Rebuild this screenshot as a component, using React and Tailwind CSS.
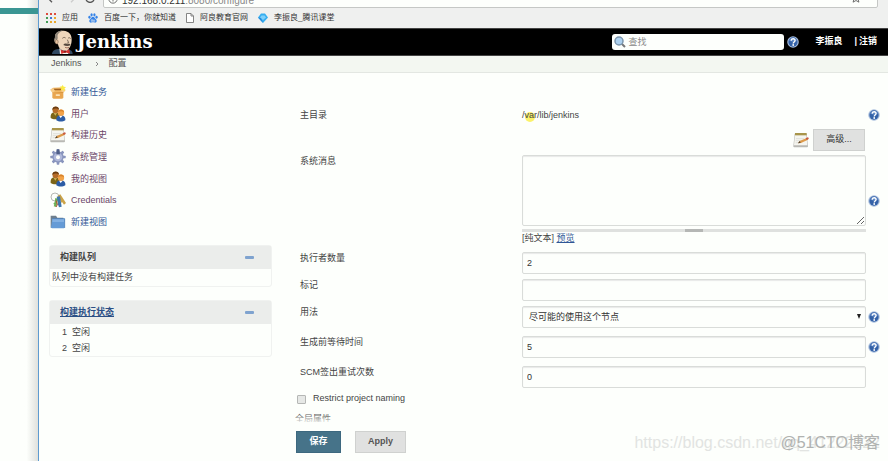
import React from "react";

function HelpIcon() {
  return (
    <svg viewBox="0 0 24 24" className="block size-3">
      <circle cx="12" cy="12" r="11.5" fill="#a9bedd" />
      <circle cx="12" cy="12" r="9.3" fill="#3462a8" />
      <path d="M4 9a8.5 8.5 0 0 1 16 0c-5 3-11 3-16 0z" fill="#5f88c4" />
      <path d="M8.3 9.3c.2-5 7.8-5 7.8-.3 0 3-3.6 3-3.6 5.8" fill="none" stroke="#fff" strokeWidth="2.8" />
      <circle cx="12.4" cy="18" r="1.8" fill="#fff" />
    </svg>
  );
}

function HelpButton() {
  return (
    <button type="button" aria-label="帮助" className="block shrink-0">
      <HelpIcon />
    </button>
  );
}

function BoxIcon() {
  return (
    <svg viewBox="0 0 48 48" className="size-4">
      <path d="M7 21h33v19q0 4-4 4H11q-4 0-4-4z" fill="#e9a64f" />
      <path d="M7 21h33v5H7z" fill="#c47a25" />
      <path d="M1 17l8-6 30-1 7 8-8 7-30 1z" fill="#f0b765" />
      <path d="M10 14h27l3 5H8z" fill="#a56420" />
      <path d="M1 17l9-5 5 9-8 5zM47 18l-8-6-6 9 8 5z" fill="#f7cd8a" />
      <rect x="17" y="31" width="13" height="5" rx="2" fill="#fbe3b8" />
      <path d="M38 2l3 6 7 1-5 5 2 7-7-4-6 3 2-7-5-5 7-1z" fill="#fbec45" />
    </svg>
  );
}

function PeopleIcon() {
  return (
    <svg viewBox="0 0 48 48" className="size-4">
      <path d="M2 36c-1-12 4-17 13-17s15 5 14 17c-7 5-20 5-27 0z" fill="#7b6417" />
      <path d="M11 21l5 8 5-8z" fill="#c9b45a" />
      <circle cx="17" cy="12" r="9.5" fill="#b56c28" />
      <path d="M7 12C6-1 27-2 27 11c-4-4-13-5-20 1z" fill="#6b3d10" />
      <path d="M19 43c-1-10 4-15 13-15s15 5 14 15c-7 5-20 5-27 0z" fill="#2b5ca5" />
      <path d="M27 29l5 7 6-7z" fill="#fff" />
      <circle cx="33" cy="20" r="9.5" fill="#f2a348" />
      <path d="M24 19c0-11 18-11 18 0-5-4-12-5-18 0z" fill="#d8832b" />
    </svg>
  );
}

function NotepadIcon() {
  return (
    <svg viewBox="0 0 48 48" className="size-4">
      <path d="M5 5h36l4 38q0 3-3 3H4q-3 0-3-3z" fill="#b9b9b4" />
      <path d="M6 9h34l3 31H3z" fill="#f5f5ef" />
      <path d="M6 3h35v7H6z" fill="#a8954a" />
      <path d="M9 20h24M8 26h18M8 32h14" stroke="#d3d7d0" strokeWidth="2" />
      <path d="M15 34l5-7 21-9 4 5-21 10z" fill="#dd9a4a" />
      <path d="M38 19l6-3q4 1 3 5l-6 3z" fill="#c95b43" />
      <path d="M15 34l5-7 3 5z" fill="#4d4232" />
    </svg>
  );
}

function GearIcon() {
  return (
    <svg viewBox="0 0 48 48" className="size-4">
      <g fill="#8995bd">
        <rect x="20" y="1" width="8" height="46" rx="2" />
        <rect x="20" y="1" width="8" height="46" rx="2" transform="rotate(45 24 24)" />
        <rect x="20" y="1" width="8" height="46" rx="2" transform="rotate(90 24 24)" />
        <rect x="20" y="1" width="8" height="46" rx="2" transform="rotate(135 24 24)" />
        <circle cx="24" cy="24" r="17" />
      </g>
      <circle cx="24" cy="24" r="13" fill="#b0b9da" />
      <circle cx="24" cy="25" r="6" fill="#fdfffc" />
      <path d="M20 1h8l2 15H19z" fill="#4f5f87" />
    </svg>
  );
}

function KeysIcon() {
  return (
    <svg viewBox="0 0 48 48" className="size-4">
      <circle cx="15" cy="15" r="12" fill="none" stroke="#b5b8b3" strokeWidth="3" />
      <path d="M22 12l9-5 17 26-6 5-5-7-3 1-2-5z" fill="#cba348" />
      <path d="M16 18l9 2-6 25-8-2 2-5-3-3 4-4z" fill="#6daf54" />
      <path d="M20 14l10-1 5 31-8 2-2-6-3-2 2-6z" fill="#3f76ad" />
      <path d="M19 26l3 12-4 7" fill="none" stroke="#ba4b35" strokeWidth="3" />
    </svg>
  );
}

function FolderIcon() {
  return (
    <svg viewBox="0 0 48 48" className="size-4">
      <path d="M2 5h16l4 6h18v30H2z" fill="#6f7f8c" />
      <path d="M7 14h37v26q0 3-3 3H7q-4 0-4-3z" fill="#659bd6" />
      <path d="M7 14h37v10H7z" fill="#82b0e2" />
      <path d="M7 14h37v28" fill="none" stroke="#4076b1" strokeWidth="2" />
    </svg>
  );
}

function ButlerLogo() {
  return (
    <svg viewBox="0 0 66 72" className="block h-6 w-[22px]">
      <path d="M0 72c0-8 8-14 18-15l30 1c9 2 14 6 14 14z" fill="#2f4860" />
      <path d="M22 54l10 12 17-9v15H24z" fill="#f5f4ee" />
      <path d="M9 22C8 8 20 1 34 2c18 1 26 13 25 29-1 18-8 30-21 31-12 0-18-9-20-19C10 42 4 34 9 22z" fill="#efd6bb" />
      <path d="M9 25C7 10 17 2 31 2 21 7 15 13 17 21c1 6-2 6-3 11-5-2-4-4-5-7z" fill="#8d8478" />
      <path d="M11 30c5-3 9 2 7 8-1 5-6 5-8 0z" fill="#e6c2a0" stroke="#6b5541" strokeWidth="1.5" />
      <path d="M31 25c4-4 7-3 10-1M48 25c3-3 6-2 8 1M46 29l4 9-6 2" fill="none" stroke="#4a3b30" strokeWidth="2" />
      <path d="M34 45c4-6 9-5 12-2 3-3 8-1 10 2-7 4-15 3-22 0z" fill="#55483e" />
      <path d="M39 52c4 2 8 2 12 0" fill="none" stroke="#7d4335" strokeWidth="2" />
      <path d="M26 59l13 5 13-6 2 13-14-4-12 5z" fill="#d6322e" />
      <circle cx="39" cy="65" r="3.5" fill="#8d1c1c" />
    </svg>
  );
}

function AppsIcon() {
  return (
    <svg viewBox="0 0 10 10" className="size-[10px]">
      <path d="M0 0h2v2H0zM4 0h2v2H4zM8 0h2v2H8z" fill="#dd4b3d" />
      <path d="M0 4h2v2H0zM0 8h2v2H0z" fill="#3f9b54" />
      <path d="M4 4h2v2H4z" fill="#4178d5" />
      <path d="M8 4h2v2H8zM4 8h2v2H4zM8 8h2v2H8z" fill="#eaa82d" />
    </svg>
  );
}

function PawIcon() {
  return (
    <svg viewBox="0 0 24 24" className="size-[10px]" fill="#3583e8">
      <ellipse cx="3.5" cy="10" rx="2.7" ry="3.5" />
      <ellipse cx="8.6" cy="4.4" rx="2.7" ry="3.9" />
      <ellipse cx="15.4" cy="4.4" rx="2.7" ry="3.9" />
      <ellipse cx="20.5" cy="10" rx="2.7" ry="3.5" />
      <path d="M12 9c4 0 4 4 7 6 4 4 1 9-3 8-3-1-5-1-8 0-4 1-7-4-3-8 3-2 3-6 7-6z" />
      <path d="M8 16h3v4H8zM13 16v4h3v-4" fill="none" stroke="#eef1ee" strokeWidth="1.3" />
    </svg>
  );
}

function PageIcon() {
  return (
    <svg viewBox="0 0 16 20" className="h-[10px] w-2">
      <path d="M1 1h9l5 5v13H1z" fill="#fff" stroke="#777" strokeWidth="1.8" />
      <path d="M10 1v5h5" fill="none" stroke="#777" strokeWidth="1.8" />
    </svg>
  );
}

function DiamondIcon() {
  return (
    <svg viewBox="0 0 20 20" className="size-[10px]">
      <path d="M6 1h8l6 8-10 11L0 9z" fill="#36aef0" />
      <path d="M7 5h6l3 4-6 5-6-5z" fill="#7fd0fa" />
      <path d="M10 20L0 9l6 1z" fill="#2688dc" />
    </svg>
  );
}

const bookmarks = [
  { icon: <AppsIcon />, label: "应用" },
  { icon: <PawIcon />, label: "百度一下，你就知道" },
  { icon: <PageIcon />, label: "阿良教育官网" },
  { icon: <DiamondIcon />, label: "李振良_腾讯课堂" },
];

function Browser() {
  return (
    <div className="bg-[#eff0ef] text-[#333]">
      <div className="flex h-2 items-end overflow-hidden pr-[10px] pl-2">
        <div className="flex h-4 w-14 shrink-0 items-end gap-[9px] pb-[5px]">
          <svg viewBox="0 0 12 12" className="size-[10px]" fill="none" stroke="#555" strokeWidth="1.6">
            <path d="M11 6H2M6 1L1 6l5 5" />
          </svg>
          <svg viewBox="0 0 12 12" className="size-[10px]" fill="none" stroke="#ccc" strokeWidth="1.6">
            <path d="M1 6h9M6 1l5 5-5 5" />
          </svg>
          <svg viewBox="0 0 12 12" className="size-[10px]" fill="none" stroke="#555" strokeWidth="1.6">
            <path d="M10.5 4A5 5 0 1 0 11 7M11 1v4H7" />
          </svg>
        </div>
        <div className="flex h-5 flex-1 items-end gap-1 rounded-[2px] border border-[#c5c7c5] bg-[#fdfffc] pr-4 pl-1">
          <svg viewBox="0 0 12 12" className="mb-[3px] size-[10px] shrink-0" fill="none" stroke="#555">
            <circle cx="6" cy="6" r="5" />
            <path d="M6 5v4M6 2.5v1.3" />
          </svg>
          <span className="flex-1 text-[10px] leading-3 text-[#888]">
            <span className="text-[#333]">192.168.0.211</span>:8080/configure
          </span>
          <svg viewBox="0 0 12 12" className="mb-1 size-[10px]" fill="none" stroke="#555">
            <path d="M6 1l1.500 3.500 4 .3-3 2.600 1 3.600L6 9l-3.500 2 1-3.600-3-2.600 4-.3z" />
          </svg>
        </div>
      </div>
      <nav className="flex h-5 items-center gap-[10px] pl-[7px] text-[8px] leading-3">
        {bookmarks.map((b) => (
          <a key={b.label} href="#" className="flex items-center gap-[6px] whitespace-nowrap">
            {b.icon}
            {b.label}
          </a>
        ))}
      </nav>
    </div>
  );
}

function Header() {
  return (
    <header className="flex h-7 items-center border-y border-[#444] bg-black pr-[11px] pl-[13px] text-[9px] font-bold text-white">
      <a href="#" className="flex flex-1 items-center gap-[3px]">
        <ButlerLogo />
        <span className="font-['DejaVu_Serif','Liberation_Serif',serif] text-[18px] leading-6">Jenkins</span>
      </a>
      <div className="flex h-4 w-[172px] items-center gap-[2px] rounded-[3px] bg-[#fdfffc] pl-[2px]">
        <svg viewBox="0 0 24 24" className="size-3 shrink-0">
          <path d="M15 15l7 7" stroke="#777" strokeWidth="4" />
          <circle cx="10" cy="10" r="8" fill="#acd0ef" stroke="#7b95ad" strokeWidth="3" />
        </svg>
        <input type="search" aria-label="查找" placeholder="查找" className="h-4 w-full bg-transparent text-[9px] font-normal text-[#333] outline-none placeholder:text-[#888]" />
      </div>
      <div className="ml-[3px]"><HelpButton /></div>
      <a href="#" className="ml-4">李振良</a>
      <span className="mr-[2px] ml-3">|</span>
      <a href="#">注销</a>
    </header>
  );
}

const tasks = [
  { icon: <BoxIcon />, label: "新建任务", color: "text-[#2f5796]" },
  { icon: <PeopleIcon />, label: "用户", color: "text-[#6b4668]" },
  { icon: <NotepadIcon />, label: "构建历史", color: "text-[#6b4668]" },
  { icon: <GearIcon />, label: "系统管理", color: "text-[#6b4668]" },
  { icon: <PeopleIcon />, label: "我的视图", color: "text-[#6b4668]" },
  { icon: <KeysIcon />, label: "Credentials", color: "text-[#6b4668]" },
  { icon: <FolderIcon />, label: "新建视图", color: "text-[#2f5796]" },
];

function Pane({ title, children }) {
  return (
    <section className="rounded-[3px] border border-[#f0f2f0]">
      <div className="flex h-[23px] items-center justify-between bg-[#ebedeb] pr-[17px] pl-[10px] text-[9px] font-bold">
        {title}
        <button type="button" aria-label="折叠" className="h-[3px] w-[9px] rounded-[1px] bg-[#7fa3cf]" />
      </div>
      {children}
    </section>
  );
}

function Sidebar() {
  return (
    <aside className="flex w-[233px] shrink-0 flex-col pt-2 pl-[10px]">
      <nav className="grid h-[152px] grid-rows-7">
        {tasks.map((t) => (
          <a key={t.label} href="#" className={"flex items-center gap-[5px] pl-px text-[9px] leading-3 " + t.color}>
            {t.icon}
            {t.label}
          </a>
        ))}
      </nav>
      <div className="mt-3 flex flex-col gap-[13px]">
        <Pane title={<span>构建队列</span>}>
          <p className="px-[2px] pt-[2px] pb-[3px] leading-3">队列中没有构建任务</p>
        </Pane>
        <Pane title={<a href="#" className="text-[#2c4f85] underline">构建执行状态</a>}>
          <table className="ml-3 leading-4">
            <tbody>
              <tr><td className="w-[10px]">1</td><td>空闲</td></tr>
              <tr><td className="w-[10px]">2</td><td>空闲</td></tr>
            </tbody>
          </table>
        </Pane>
      </div>
    </aside>
  );
}

const field = "block h-[22px] w-full rounded-[2px] border border-[#d9dcd9] bg-[#fdfffc] px-1 text-[9px] text-[#333] shadow-[inset_0_1px_1px_#e8e9e8]";

function Row({ id, label, help, tall, children }) {
  return (
    <div className={"flex items-start " + (tall ? "pb-2" : "pb-[5px]")}>
      <label htmlFor={id} className="w-[222px] shrink-0 leading-3">{label}</label>
      <div className="min-w-0 flex-1">{children}</div>
      <div className="w-[22px] shrink-0 self-center pl-[2px]">{help && <HelpButton />}</div>
    </div>
  );
}

function ConfigForm() {
  return (
    <form className="min-w-0 flex-1 pt-9 pl-7" onSubmit={(e) => e.preventDefault()}>
      <div className="flex h-5 items-start">
        <span className="w-[222px] shrink-0 leading-3">主目录</span>
        <div className="flex-1 leading-3">
          <span className="relative">
            <span className="absolute top-[2px] left-[3px] size-[10px] rounded-full bg-[#fbf26a]" />
            <span className="relative">/var/lib/jenkins</span>
          </span>
        </div>
        <div className="w-[22px] pl-[2px]"><HelpButton /></div>
      </div>
      <div className="flex items-center justify-end gap-1 pr-[23px] pb-1">
        <NotepadIcon />
        <button type="button" className="h-[22px] w-[52px] border border-[#cfd1cf] bg-[#e0e1e0] text-[#333]">高级...</button>
      </div>
      <div className="flex items-start">
        <label htmlFor="message" className="w-[222px] shrink-0 leading-3">系统消息</label>
        <div className="min-w-0 flex-1">
          <textarea id="message" className="block h-[71px] w-full rounded-[2px] border border-[#d9dcd9] bg-[#fdfffc] p-1 shadow-[inset_0_1px_1px_#e8e9e8]" />
          <div className="mt-[3px] flex h-[3px] justify-center bg-[#dfe1df]">
            <div className="w-[18px] bg-[#b5b7b5]" />
          </div>
          <p className="h-5 leading-3">[纯文本] <a href="#" className="text-[#2f5796] underline">预览</a></p>
        </div>
        <div className="w-[22px] shrink-0 pt-10 pl-[2px]"><HelpButton /></div>
      </div>
      <Row id="executors" label="执行者数量"><input id="executors" defaultValue="2" className={field} /></Row>
      <Row id="labels" label="标记"><input id="labels" className={field} /></Row>
      <Row id="usage" label="用法" help tall>
        <div className="relative">
          <select id="usage" className={field + " appearance-none pt-[2px] pl-[6px]"}>
            <option>尽可能的使用这个节点</option>
          </select>
          <svg viewBox="0 0 4 5" className="pointer-events-none absolute top-2 right-[5px] h-[5px] w-1"><path d="M0 0h4L2 5z" fill="#222" /></svg>
        </div>
      </Row>
      <Row id="quiet" label="生成前等待时间" help tall><input id="quiet" defaultValue="5" className={field} /></Row>
      <Row id="retry" label="SCM签出重试次数"><input id="retry" defaultValue="0" className={field} /></Row>
      <label className="-ml-[3px] flex h-3 items-center gap-[7px]">
        <input type="checkbox" className="m-0 size-[9px] appearance-none rounded-[1px] border border-[#b5b7b5] bg-[#e6e8e6]" />
        Restrict project naming
      </label>
      <div className="relative -ml-[5px] mt-2 h-[9px] overflow-hidden">
        <p className="leading-3">全局属性</p>
        <div className="absolute inset-0 bg-linear-to-b from-[#fdfffc]/0 to-[#fdfffc]/80" />
      </div>
      <div className="-ml-1 mt-[9px] flex gap-[14px] font-bold">
        <button type="submit" className="h-[22px] w-[45px] border border-[#3d687f] bg-[#467389] text-white">保存</button>
        <button type="button" className="h-[22px] w-[51px] border border-[#cfd1cf] bg-[#e0e1e0] text-[#555]">Apply</button>
      </div>
    </form>
  );
}

export default function App() {
  return (
    <div className="relative flex min-h-screen overflow-hidden bg-[#fdfffc] font-['Liberation_Sans','Noto_Sans_CJK_SC',sans-serif] text-[9px] text-[#444]">
      <div className="w-[38px] shrink-0 bg-linear-to-r from-[#fdfffc] from-70% to-[#dfe1dd] pt-2">
        <div className="h-[6px] bg-[#3a9693]" />
      </div>
      <div className="min-w-0 flex-1 border-l border-[#5e9bd0]">
        <Browser />
        <Header />
        <nav className="flex h-[17px] items-center border-b border-[#e3e7e2] bg-[#f3f7f1] pl-3 text-[#555]">
          <a href="#">Jenkins</a>
          <svg viewBox="0 0 4 6" className="mr-[10px] ml-[13px] h-[6px] w-1" fill="none" stroke="#888"><path d="M1 1l2 2-2 2" /></svg>
          <a href="#">配置</a>
        </nav>
        <div className="flex">
          <Sidebar />
          <ConfigForm />
        </div>
      </div>
      <div className="pointer-events-none absolute right-2 bottom-2 text-[16px] leading-5 whitespace-nowrap">
        <span className="absolute right-0 text-[#e2e4e2]">https://blog.csdn.net/qq_41222222</span>
        <span className="relative text-[#b0b2b0]">@51CTO博客</span>
      </div>
    </div>
  );
}
